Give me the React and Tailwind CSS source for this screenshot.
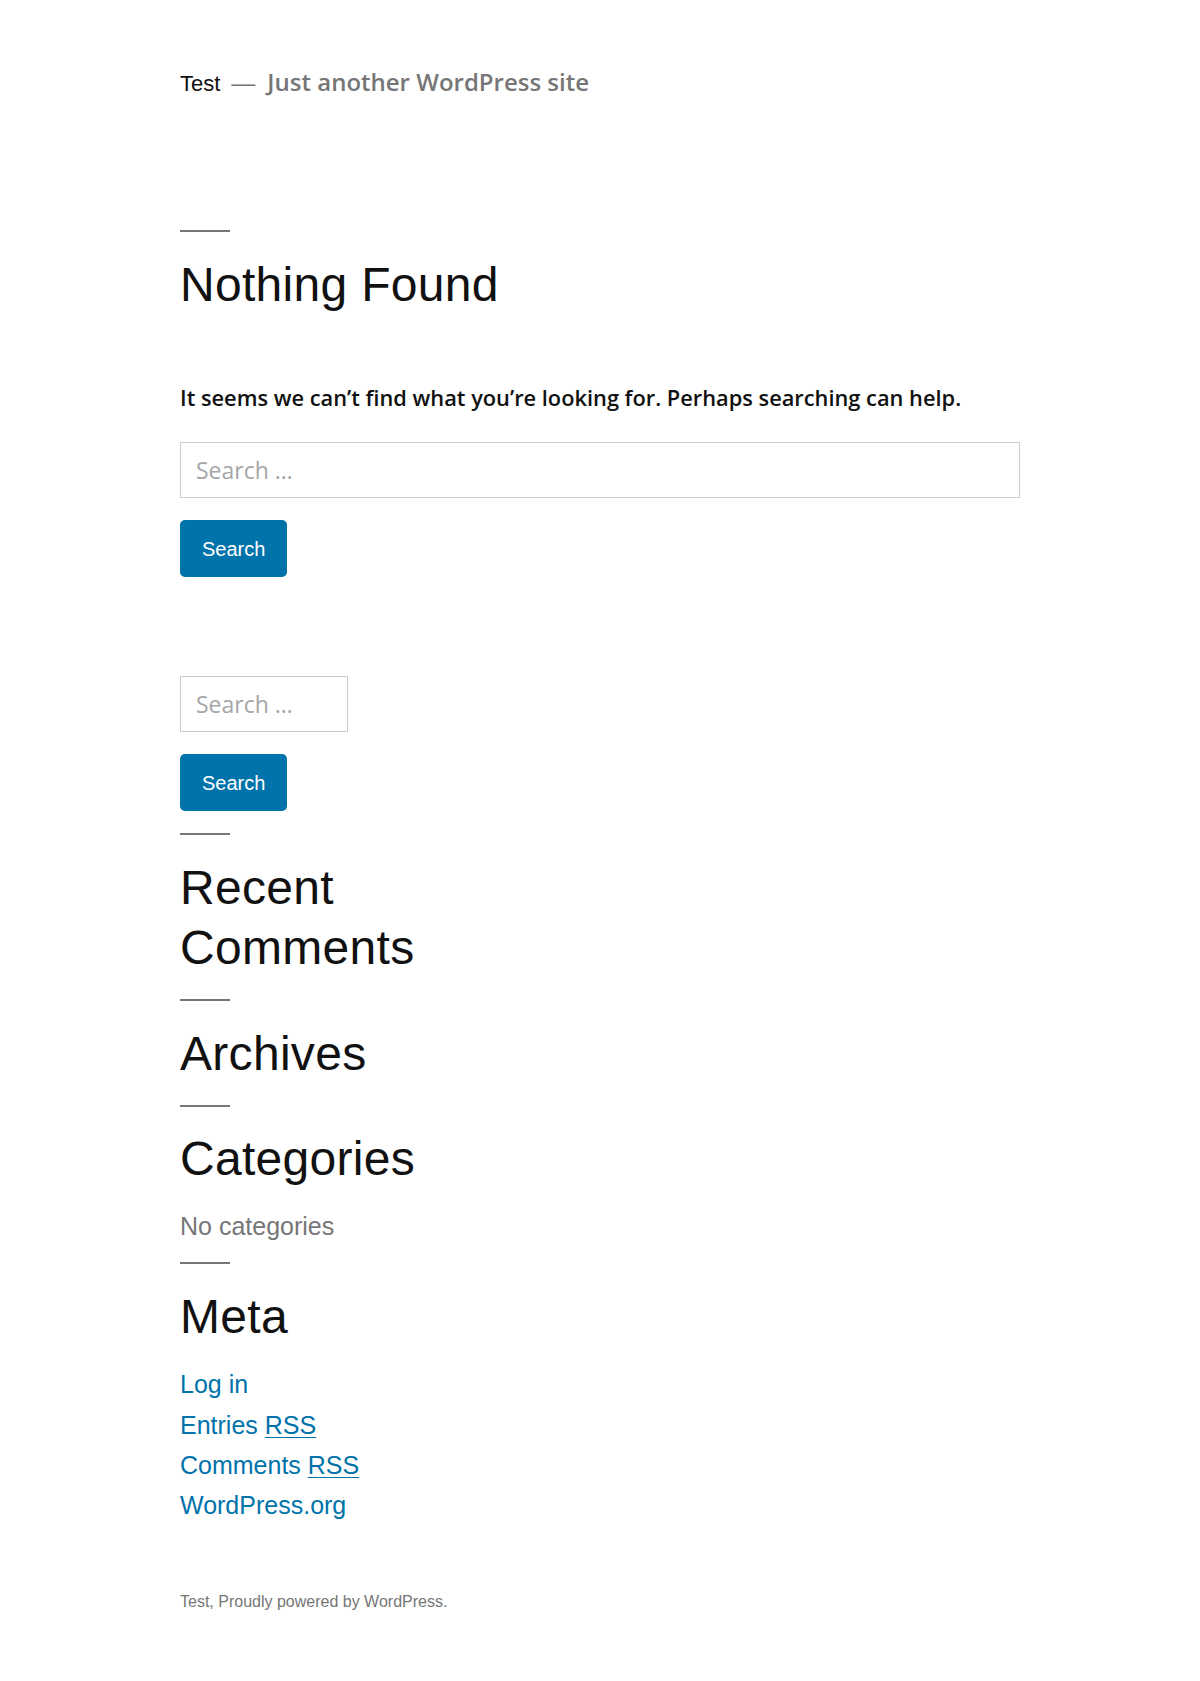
export default function App() {
  const sans = { fontFamily: '"Liberation Sans", Arial, sans-serif' };
  const hum = { fontFamily: '"Open Sans", Lato, sans-serif' };
  const Sep = ({ className = "" }) => (
    <div className={"w-[50px] h-[2px] bg-[#767676] " + className} />
  );
  const H = ({ children, className = "" }) => (
    <h2
      className={"text-[48px] leading-[60px] tracking-[0.3px] text-[#111] font-normal " + className}
      style={sans}
    >
      {children}
    </h2>
  );
  return (
    <div className="bg-white min-h-[1681px] pl-[180px] pr-[180px] pt-[67px] pb-[60px]">
      {/* header */}
      <div className="flex items-baseline h-[30px]">
        <span className="text-[22px] leading-[30px] text-[#111]" style={sans}>Test</span>
        <span className="text-[24px] leading-[30px] text-[#767676] ml-[11px]" style={sans}>—</span>
        <span className="text-[24px] leading-[30px] text-[#767676] font-semibold ml-[12px]" style={hum}>
          Just another WordPress site
        </span>
      </div>

      {/* main */}
      <Sep className="mt-[133px]" />
      <H className="mt-[23px]">Nothing Found</H>
      <p className="mt-[67px] text-[21.8px] leading-[32px] text-[#111] font-semibold" style={hum}>
        It seems we can’t find what you’re looking for. Perhaps searching can help.
      </p>
      <div className="mt-[28px] flex flex-col items-start">
        <input
          type="search"
          placeholder="Search …"
          className="w-[840px] h-[56px] border border-[#ccc] px-[15px] text-[23px] text-[#111] placeholder:text-[#a6a6a6] outline-none"
          style={hum}
        />
        <button
          className="mt-[22px] h-[57px] px-[22px] rounded-[5px] bg-[#0073aa] text-white text-[20px]"
          style={sans}
        >
          Search
        </button>
      </div>

      {/* widgets */}
      <div className="w-[340px] mt-[99px]">
        <div className="flex flex-col items-start">
          <input
            type="search"
            placeholder="Search …"
            className="w-[168px] h-[56px] border border-[#ccc] px-[15px] text-[23px] text-[#111] placeholder:text-[#a6a6a6] outline-none"
            style={hum}
          />
          <button
            className="mt-[22px] h-[57px] px-[22px] rounded-[5px] bg-[#0073aa] text-white text-[20px]"
            style={sans}
          >
            Search
          </button>
        </div>

        <Sep className="mt-[22px]" />
        <H className="mt-[23px]">Recent Comments</H>

        <Sep className="mt-[21px]" />
        <H className="mt-[23px]">Archives</H>

        <Sep className="mt-[21px]" />
        <H className="mt-[22px]">Categories</H>
        <p className="mt-[17px] text-[25px] leading-[40.3px] text-[#767676]" style={sans}>No categories</p>

        <Sep className="mt-[16px]" />
        <H className="mt-[23px]">Meta</H>
        <ul className="mt-[17px] text-[25px] leading-[40.3px] text-[#0073aa]" style={sans}>
          <li>Log in</li>
          <li>Entries <span className="underline underline-offset-[3px] decoration-1">RSS</span></li>
          <li>Comments <span className="underline underline-offset-[3px] decoration-1">RSS</span></li>
          <li>WordPress.org</li>
        </ul>
      </div>

      {/* footer */}
      <footer className="mt-[65px] text-[16px] leading-[24px] text-[#767676]" style={sans}>
        Test, Proudly powered by WordPress.
      </footer>
    </div>
  );
}
